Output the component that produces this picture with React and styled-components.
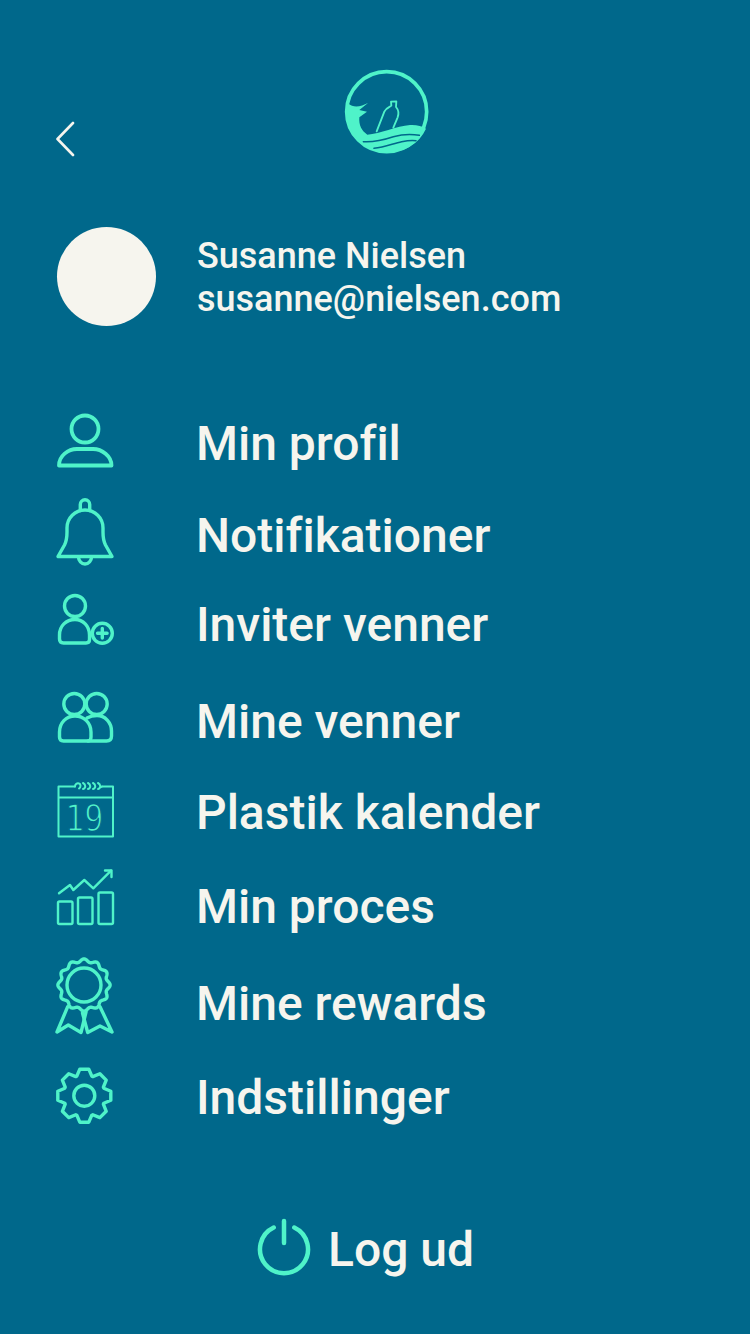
import React from 'react'
import styled, { createGlobalStyle } from 'styled-components'

const MINT = '#4ff3c9'
const BG = '#00688b'
const CREAM = '#f6f5ee'

const GlobalStyle = createGlobalStyle`
    html, body {
        margin: 0;
        padding: 0;
        background: ${BG};
    }
    body {
        font-family: Roboto, "Liberation Sans", sans-serif;
        font-variant-ligatures: none;
    }
`

const Page = styled.div`
    width: 750px;
    height: 1334px;
    box-sizing: border-box;
    padding: 60px 0 0 57px;
    overflow: hidden;
    background: ${BG};
    color: ${CREAM};
`

const Header = styled.header`
    display: flex;
    align-items: flex-end;
`

const BackButton = styled.button`
    display: block;
    width: 22px;
    height: 38px;
    margin: 0 252px 7px -1px;
    padding: 0;
    border: 0;
    background: none;
`

const Profile = styled.section`
    display: flex;
    align-items: center;
    gap: 41px;
    margin-top: 62px;
`

const Avatar = styled.div`
    width: 99px;
    height: 99px;
    border-radius: 50%;
    background: ${CREAM};
`

const ProfileText = styled.div`
    padding-top: 2px;
    font-size: 36px;
    font-weight: 500;
    line-height: 43px;
`

const Menu = styled.nav`
    margin-top: 77px;
`

const Row = styled.div`
    display: flex;
    height: 80px;
    margin-top: ${props => props.$gap}px;
`

const IconSlot = styled.div`
    width: 141px;
    flex: none;
    margin: ${props => props.$top}px 0 0 -2px;
`

const Label = styled.span`
    font-size: 48px;
    font-weight: 500;
    line-height: 82px;
`

const Logout = styled.div`
    display: flex;
    align-items: flex-start;
    gap: 16px;
    margin: 81px 0 0 199px;
`

const LogoutLabel = styled.span`
    font-size: 48px;
    font-weight: 500;
    line-height: 64px;
`

const Icon = styled.svg`
    display: block;
    fill: none;
    stroke: ${props => props.$color || MINT};
    stroke-width: ${props => props.$weight || 3.4};
    stroke-linecap: round;
    stroke-linejoin: round;
`

const CalendarDay = styled.text`
    font-family: "DejaVu Sans Mono", monospace;
    font-size: 38px;
    fill: ${MINT};
    stroke: ${BG};
    stroke-width: 1.3;
    stroke-linecap: butt;
`

// scalloped edge of the rosette
const rosettePath = (cx, cy) => {
    let d = ''
    for (let i = 0; i <= 240; i++) {
        const a = (i / 240) * Math.PI * 2
        const r = 24.6 + 1.5 * Math.cos(a * 12)
        const x = cx + r * Math.sin(a)
        const y = cy - r * Math.cos(a)
        d += `${i ? 'L' : 'M'}${x.toFixed(2)} ${y.toFixed(2)}`
    }
    return d + 'Z'
}

// 8 teeth, first one pointing up
const gearPath = (cx, cy) => {
    const teeth = [
        [-7.5, -19.5], [-4.5, -26.5], [4.5, -26.5], [7.5, -19.5],
    ]
    let d = ''
    for (let t = 0; t < 8; t++) {
        const a = (t / 8) * Math.PI * 2
        teeth.forEach(([px, py]) => {
            const x = cx + px * Math.cos(a) - py * Math.sin(a)
            const y = cy + px * Math.sin(a) + py * Math.cos(a)
            d += `${d ? 'L' : 'M'}${x.toFixed(2)} ${y.toFixed(2)}`
        })
    }
    return d + 'Z'
}

const Logo = () => (
    <Icon width="110" height="105" viewBox="0 0 330 315" $weight="11">
        <circle cx="170" cy="155" r="120" />
        <path
            d="M54 130C72 146 94 139 114 129L88 150L111 155L88 172C86 195 95 213 112 224C150 222 200 198 240 195C260 194 275 198 288 206A122 122 0 0 1 170 277A122 122 0 0 1 54 130Z"
            fill={MINT}
            stroke="none"
        />
        <path d="M100 245C130 247 160 240 190 230C220 222 245 222 268 226" stroke={BG} strokeWidth="4.5" />
        <path d="M132 265C165 262 190 250 215 245C230 242 245 240 258 242" stroke={BG} strokeWidth="4.5" />
        <path
            d="M140 214L163 155C168 143 180 141 184 137L183 125L199 124L198 141C206 150 207 160 203 172L190 203"
            strokeWidth="5.5"
        />
    </Icon>
)

const Chevron = () => (
    <Icon width="22" height="38" viewBox="0 0 22 38" $color={CREAM} $weight="2.6">
        <path d="M17 3L1.5 19L17 35" />
    </Icon>
)

const ProfileIcon = () => (
    <Icon width="60" height="58" viewBox="0 0 60 58" $weight="3.8">
        <circle cx="30" cy="17" r="13.5" />
        <path d="M4 53.5C4 44 13 37 22 37H38C47 37 56.5 44 56.5 53.5Z" />
    </Icon>
)

const BellIcon = () => (
    <Icon width="60" height="72" viewBox="0 0 60 72">
        <path d="M3 60.5H57L50.5 49C48.5 45 48 41 48 36V32C48 22 40 14 30 14C20 14 12 22 12 32V36C12 41 11.5 45 9.5 49Z" />
        <path d="M25.3 14.5V8.5A4.7 4.7 0 0 1 34.7 8.5V14.5" />
        <path d="M23.5 61A6.5 7 0 0 0 36.5 61" />
    </Icon>
)

const InviteIcon = () => (
    <Icon width="60" height="56" viewBox="0 0 60 56">
        <circle cx="20" cy="14" r="10.5" />
        <path d="M8.5 51H31Q34.5 51 34.5 47.5V43C34.5 34 28 27.5 20 27.5C11 27.5 4.5 34 4.5 43V47Q4.5 51 8.5 51Z" />
        <circle cx="47.3" cy="41.3" r="10" />
        <path d="M47.3 36.5V46.1M42.5 41.3H52.1" strokeWidth="3.4" />
    </Icon>
)

const FriendsIcon = () => (
    <Icon width="60" height="58" viewBox="0 0 60 58">
        <circle cx="19.3" cy="16" r="10.5" />
        <circle cx="41.7" cy="16" r="10.5" />
        <path d="M8.5 53H33Q36 53 36 49V44C36 35 29 28 20 28C11 28 4.5 35 4.5 44V49Q4.5 53 8.5 53Z" />
        <path d="M32 30C35 28.3 39 27.5 42 27.5C50 27.5 56.5 34.5 56.5 43V48Q56.5 53 51.5 53H33" />
    </Icon>
)

const CalendarIcon = () => (
    <Icon width="60" height="58" viewBox="0 0 60 58" $weight="2">
        <path d="M20 5.5H3.5V55.5H58V5.5H47M3.5 16.5H58" />
        <path d="M20 5.5C20 3 22 2 24 2.5C26 3 26 6 24 7.5M28 2C31 3.5 31 7 28 8M33 2C36 3.5 36 7 33 8M38 2C41 3.5 41 7 38 8M43 2C46 3.5 46 7 43 8L47 5.5" />
        <g transform="translate(10 50) scale(0.84 1)">
            <CalendarDay>19</CalendarDay>
        </g>
    </Icon>
)

const ChartIcon = () => (
    <Icon width="60" height="60" viewBox="0 0 60 60" $weight="2.4">
        <rect x="3" y="33.5" width="14.5" height="22.5" rx="1.5" />
        <rect x="23" y="29.5" width="14.5" height="26.5" rx="1.5" />
        <rect x="43.5" y="24.5" width="14.5" height="31.5" rx="1.5" />
        <path d="M4 25.3L15 17L18.3 22L29.3 12L38.3 20.3L56 2.7" />
        <path d="M50 2.5H56.5V9" />
    </Icon>
)

const RewardIcon = () => (
    <Icon width="60" height="80" viewBox="0 0 60 80">
        <path d={rosettePath(29, 29)} />
        <circle cx="29" cy="29" r="17" />
        <path d="M12.7 50.7L2 76L13.3 69L26 76.5L31 56" />
        <path d="M45 50.7L57 76L45 70L32.7 76.5L27.5 57" />
    </Icon>
)

const SettingsIcon = () => (
    <Icon width="60" height="60" viewBox="0 0 60 60">
        <path d={gearPath(29.3, 29.7)} />
        <circle cx="29.3" cy="29.7" r="10.5" />
    </Icon>
)

const PowerIcon = () => (
    <Icon width="56" height="60" viewBox="0 0 56 60" $weight="4.5">
        <path d="M38.3 9.5A24 24 0 1 1 17.7 9.5" />
        <path d="M28 3V25" />
    </Icon>
)

// gap = space above the row, top = where the icon sits inside the row
const items = [
    { label: 'Min profil', Glyph: ProfileIcon, gap: 0, top: 9 },
    { label: 'Notifikationer', Glyph: BellIcon, gap: 12, top: 1 },
    { label: 'Inviter venner', Glyph: InviteIcon, gap: 9, top: 8 },
    { label: 'Mine venner', Glyph: FriendsIcon, gap: 17, top: 7 },
    { label: 'Plastik kalender', Glyph: CalendarIcon, gap: 11, top: 9 },
    { label: 'Min proces', Glyph: ChartIcon, gap: 14, top: 2 },
    { label: 'Mine rewards', Glyph: RewardIcon, gap: 17, top: -7 },
    { label: 'Indstillinger', Glyph: SettingsIcon, gap: 14, top: 9 },
]

const App = () => (
    <Page>
        <GlobalStyle />
        <Header>
            <BackButton aria-label="Tilbage">
                <Chevron />
            </BackButton>
            <Logo />
        </Header>
        <Profile>
            <Avatar />
            <ProfileText>
                <div>Susanne Nielsen</div>
                <div>susanne@nielsen.com</div>
            </ProfileText>
        </Profile>
        <Menu>
            {items.map(({ label, Glyph, gap, top }) => (
                <Row key={label} $gap={gap}>
                    <IconSlot $top={top}>
                        <Glyph />
                    </IconSlot>
                    <Label>{label}</Label>
                </Row>
            ))}
        </Menu>
        <Logout>
            <PowerIcon />
            <LogoutLabel>Log ud</LogoutLabel>
        </Logout>
    </Page>
)

export default App
